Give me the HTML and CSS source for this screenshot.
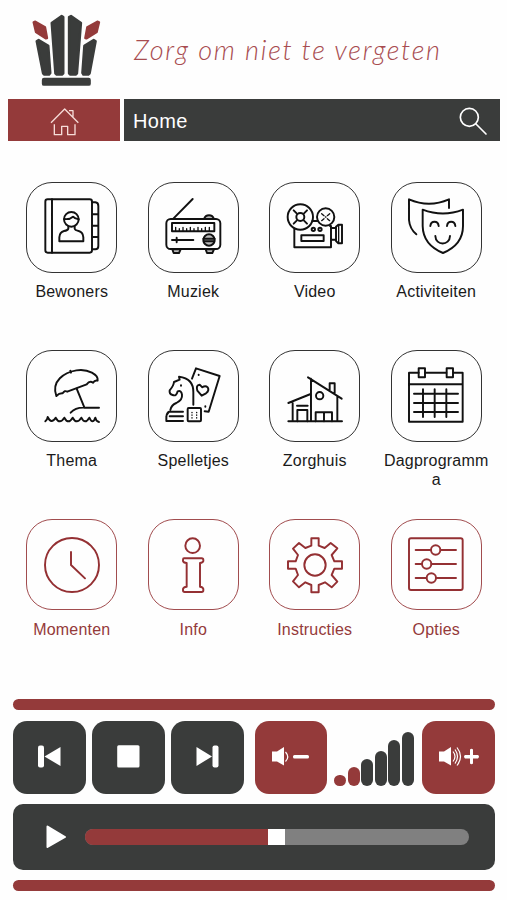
FILE: index.html
```html
<!DOCTYPE html>
<html lang="nl">
<head>
    <meta charset="UTF-8">
    <meta name="viewport" content="width=device-width, initial-scale=1.0">
    <title>Home</title>
    <link rel="stylesheet" href="styles.css">
</head>
<body>

    <header class="header">
        <svg class="logo" viewBox="96 42 207 216">
            <g class="logo-dark">
                <path d="M155 69L185 48L190 51V220L186 224H170L166 220Z"/>
                <path d="M243 69L213 48L207 51V220L211 224H227L231 220Z"/>
                <path d="M110 124L116 120L145 137L151 219L147 224H133L129 220Z"/>
                <path d="M287 124L281 120L253 137L247 219L250 224H265L269 220Z"/>
                <rect x="129" y="237" width="140" height="17" rx="3"/>
            </g>
            <g class="logo-red">
                <path d="M101 67L106 65L135 82L141 114L137 115L108 96Z"/>
                <path d="M297 67L292 65L262 82L256 114L260 115L290 96Z"/>
            </g>
        </svg>
        <div class="tagline">Zorg om niet te vergeten</div>
    </header>

    <nav class="navbar">
        <a class="home-button">
            <svg class="home-icon" viewBox="147 321 87 87">
                <path d="M150 368L191 327L232 368M204 332H216V350M160 373V404H182V379H200V404H222V373"/>
            </svg>
        </a>
        <div class="title-bar">
            <span>Home</span>
            <svg class="search-icon" viewBox="618 320 84 84">
                <circle cx="649" cy="351" r="27"/>
                <path d="M669 371L699 401"/>
            </svg>
        </div>
    </nav>

    <main class="menu">
        <a class="item">
            <div class="tile">
                <svg class="icon" viewBox="83 87 168 168">
                    <rect x="87" y="88" width="140" height="160" rx="7"/>
                    <path d="M107 88V248M228 97H237Q246 98 246 108V228Q246 238 237 238H228M229 133H246M229 167H246M229 201H246"/>
                    <circle cx="165" cy="148" r="22"/>
                    <path d="M144 147Q160 149 170 140Q176 147 187 148M156 169V176Q154 182 143 183Q130 186 129 202V214H201V202Q200 186 187 183Q176 181 175 176V169"/>
                </svg>
            </div>
            <span class="label">Bewoners</span>
        </a>
        <a class="item">
            <div class="tile">
                <svg class="icon" viewBox="81 87 168 168">
                    <path d="M106 146L164 87"/>
                    <rect x="85" y="147" width="162" height="90" rx="13"/>
                    <path class="shade" d="M198 147Q202 136 213 136T228 147Z"/>
                    <path class="shade" d="M103 238L107 249H123L128 238ZM203 238L207 249H223L228 238Z"/>
                    <rect x="102" y="159" width="127" height="25"/>
                    <path class="thin" d="M113 184V172M124 184V176M135 184V172M146 184V176M157 184V172M168 184V176M180 184V172M191 184V176M202 184V172M214 184V172"/>
                    <path d="M102 210H166M116 203V217"/>
                    <circle class="shade" cx="213" cy="210" r="17"/>
                    <path d="M196 206H230M197 214H229"/>
                </svg>
            </div>
            <span class="label">Muziek</span>
        </a>
        <a class="item">
            <div class="tile">
                <svg class="icon" viewBox="86 87 168 168">
                    <circle cx="126" cy="141" r="38"/>
                    <circle cx="126" cy="141" r="12"/>
                    <path d="M106 121L115 130M146 121L137 130M106 161L115 152M146 161L137 152"/>
                    <circle cx="202" cy="141" r="26"/>
                    <path class="thin" d="M190 131L197 137M214 131L207 137M190 152L197 146M214 152L207 146M201 141H203"/>
                    <path d="M162 153H178M108 176V232H218V168H215M218 174H233M218 209H233"/>
                    <circle cx="165" cy="178" r="5"/>
                    <circle cx="185" cy="178" r="5"/>
                    <rect x="129" y="196" width="67" height="17"/>
                    <path d="M233 170L240 164H251V220H240L233 213Z"/>
                    <path class="thin" d="M241 166V218"/>
                </svg>
            </div>
            <span class="label">Video</span>
        </a>
        <a class="item">
            <div class="tile">
                <svg class="icon" viewBox="85 87 168 168">
                    <path d="M208 114V88Q148 114 88 88V150Q90 176 110 193"/>
                    <path d="M129 119Q190 142 250 119V168Q250 224 190 249Q130 224 129 168Z"/>
                    <path d="M152 168C154 151 175 151 177 168M202 168C204 151 225 151 227 168M167 198C168 228 210 228 211 198"/>
                </svg>
            </div>
            <span class="label">Activiteiten</span>
        </a>

        <a class="item">
            <div class="tile">
                <svg class="icon" viewBox="83 83 168 168">
                    <path d="M162 91L164 97M120 167C104 122 144 96 180 90C216 84 247 104 244 121Q235 119 230 127Q220 120 211 132L153 154Q145 149 139 159Q129 158 120 167Z"/>
                    <path d="M181 145L204 201M163 217Q177 201 204 202H248"/>
                    <path d="M87 243Q93 238 94 230Q105 253 118 232Q130 254 144 232Q156 254 169 232Q181 254 195 232Q206 254 219 232Q229 254 237 232Q239 243 248 245"/>
                </svg>
            </div>
            <span class="label">Thema</span>
        </a>
        <a class="item">
            <div class="tile">
                <svg class="icon" viewBox="448 83 168 168">
                    <path d="M464 209Q467 194 482 188Q501 179 499 163Q497 149 486 153Q482 169 471 164Q460 161 462 150Q474 136 475 125L492 118L490 109Q534 114 533 156V193"/>
                    <path d="M496 135V136M502 214H460L453 224M502 228H462M502 242H452Q451 216 460 214M452 228V242"/>
                    <path d="M529 115L541 84L612 107L579 214L567 213M549 103V104M569 198V199"/>
                    <path d="M558 166L545 151Q540 134 552 133L560 141Q569 134 576 141Q582 151 571 159Z"/>
                    <rect x="516" y="203" width="40" height="40" rx="3"/>
                    <path class="thin" d="M529 216V217M543 216V217M529 224V225M543 224V225M529 232V233M543 232V233"/>
                </svg>
            </div>
            <span class="label">Spelletjes</span>
        </a>
        <a class="item">
            <div class="tile">
                <svg class="icon" viewBox="86 83 168 168">
                    <path d="M90 243H251M90 188L157 161M103 184V243M158 115V243M149 111L250 175M237 168V243M214 148V129H229V157M116 196H148"/>
                    <circle cx="184" cy="166" r="11"/>
                    <path d="M117 243V209H147V243M172 243V216H221V243M197 216V243"/>
                </svg>
            </div>
            <span class="label">Zorghuis</span>
        </a>
        <a class="item">
            <div class="tile">
                <svg class="icon" viewBox="451 83 168 168">
                    <path d="M483 97H454V244H615V97H587M502 97H566M454 132H615"/>
                    <rect x="483" y="84" width="19" height="27"/>
                    <rect x="567" y="84" width="19" height="27"/>
                    <path d="M469 160H601M469 188H601M469 215H601M496 147V230M531 147V230M566 147V230"/>
                </svg>
            </div>
            <span class="label">Dagprogramma</span>
        </a>

        <a class="item red">
            <div class="tile">
                <svg class="icon" viewBox="83 79 168 168">
                    <circle cx="167" cy="163" r="81"/>
                    <path d="M164 124V163L206 203"/>
                </svg>
            </div>
            <span class="label">Momenten</span>
        </a>
        <a class="item red">
            <div class="tile">
                <svg class="icon" viewBox="448 79 168 168">
                    <circle cx="531" cy="105" r="22"/>
                    <path d="M505 143H558Q563 143 563 148V151Q562 156 553 157V228Q562 229 563 235V239Q563 244 558 244H507Q502 244 502 239V235Q503 229 513 228V157Q503 156 502 151V147Q502 143 505 143Z"/>
                </svg>
            </div>
            <span class="label">Info</span>
        </a>
        <a class="item red">
            <div class="tile">
                <svg class="icon" viewBox="86 79 168 168">
                    <circle cx="170" cy="163" r="32"/>
                    <path d="M159 83H181V105L199 112L217 97L237 113L220 133L228 152H251V174H228L220 193L237 213L220 230L200 215L181 223V245H159V223L141 215L122 230L104 212L119 193L112 174H89V152H112L119 133L104 114L122 97L141 112L159 105Z"/>
                </svg>
            </div>
            <span class="label">Instructies</span>
        </a>
        <a class="item red">
            <div class="tile">
                <svg class="icon" viewBox="451 79 168 168">
                    <rect x="454" y="83" width="161" height="155" rx="6"/>
                    <path d="M474 118H520M549 118H595M474 160H492M521 160H595M474 202H506M535 202H595"/>
                    <circle cx="534" cy="118" r="14"/>
                    <circle cx="507" cy="160" r="14"/>
                    <circle cx="521" cy="202" r="14"/>
                </svg>
            </div>
            <span class="label">Opties</span>
        </a>
    </main>

    <footer class="player">
        <div class="stripe"></div>
        <div class="controls">
            <div class="buttons">
                <div class="button">
                    <svg viewBox="0 0 73 73">
                        <rect x="25" y="24.5" width="6" height="22" rx="2"/>
                        <path d="M31.5 35.5L47.5 26V45Z"/>
                    </svg>
                </div>
                <div class="button">
                    <svg viewBox="0 0 73 73">
                        <rect x="25.2" y="24.2" width="22.3" height="22.3" rx="1.5"/>
                    </svg>
                </div>
                <div class="button">
                    <svg viewBox="0 0 73 73">
                        <rect x="41.5" y="24.5" width="6" height="22" rx="2"/>
                        <path d="M41 35.5L25.5 26V45Z"/>
                    </svg>
                </div>
            </div>
            <div class="button volume-down">
                <svg viewBox="0 0 72 73">
                    <path d="M17 30.5H22L29 26V44.5L22 40.5H17Z"/>
                    <path class="wave" d="M30.5 31Q35 36 30.5 40.5"/>
                    <rect x="38" y="34" width="16" height="3.4" rx="1.5"/>
                </svg>
            </div>
            <div class="volume-bars">
                <span class="bar bar-1 on"></span>
                <span class="bar bar-2 on"></span>
                <span class="bar bar-3"></span>
                <span class="bar bar-4"></span>
                <span class="bar bar-5"></span>
                <span class="bar bar-6"></span>
            </div>
            <div class="button volume-up">
                <svg viewBox="0 0 73 73">
                    <path d="M17 30.5H22L29 26V44.5L22 40.5H17Z"/>
                    <path class="wave" d="M31 30.5Q35 35.5 31 40.5M33 28.5Q38 35.5 33 42.5M35 26.5Q42 35.5 35 44.5"/>
                    <path d="M48 28.5Q49.5 27 51 28.5V34H56Q58 35.7 56 37.4H51V42.5Q49.5 44 48 42.5V37.4H43Q41 35.7 43 34H48Z"/>
                </svg>
            </div>
        </div>
        <div class="progress">
            <svg class="play" viewBox="0 0 21 24">
                <path d="M1.5 1.5L19 12L1.5 22Z"/>
            </svg>
            <div class="track">
                <div class="played"></div>
                <div class="thumb"></div>
            </div>
        </div>
        <div class="stripe"></div>
    </footer>

</body>
</html>
```
FILE: styles.css
```css
* {
    box-sizing: border-box;
}

body {
    font-family: "Liberation Sans", Arial, sans-serif;
    background: #fefefe;
    color: #1a1a1a;
    margin: 0;
    height: 900px;
    overflow: hidden;
}

svg {
    display: block;
    overflow: visible;
}

.header {
    display: flex;
    height: 99px;
    padding: 14px 0 0 32px;
}

.logo {
    width: 69px;
    height: 72px;
    stroke-width: 7;
    stroke-linejoin: round;
}

.logo-dark {
    fill: #3a3c3b;
    stroke: #3a3c3b;
}

.logo-red {
    fill: #943a3a;
    stroke: #943a3a;
}

.tagline {
    font-family: Lato, "Liberation Sans", sans-serif;
    font-size: 27px;
    font-style: italic;
    font-weight: 300;
    line-height: 32px;
    letter-spacing: 1.7px;
    white-space: nowrap;
    color: #a84c50;
    margin: 20px 0 0 33px;
}

.navbar {
    display: flex;
    gap: 4px;
    height: 42px;
    padding: 0 7px 0 8px;
}

.home-button {
    display: flex;
    justify-content: center;
    align-items: center;
    width: 112px;
    padding-top: 2px;
    background: #943a3a;
}

.home-icon {
    width: 29px;
    height: 29px;
    fill: none;
    stroke: #f6dcd8;
    stroke-width: 4;
    stroke-linejoin: round;
}

.title-bar {
    display: flex;
    flex: 1;
    justify-content: space-between;
    align-items: center;
    padding: 2px 13px 0 9px;
    background: #3a3c3b;
    color: #fff;
    font-size: 20px;
    letter-spacing: 0.3px;
}

.search-icon {
    width: 28px;
    height: 28px;
    fill: none;
    stroke: #fff;
    stroke-width: 5;
    stroke-linecap: round;
}

.menu {
    display: grid;
    grid-template-columns: repeat(4, 121.5px);
    grid-auto-rows: 168.7px;
    height: 558px;
    padding: 40.5px 0 0 11px;
}

.item {
    display: flex;
    flex-direction: column;
    align-items: center;
}

.tile {
    display: flex;
    justify-content: center;
    align-items: center;
    width: 91px;
    height: 91.5px;
    border: 1.3px solid #333;
    border-radius: 26px;
}

.icon {
    width: 56px;
    height: 56px;
    fill: none;
    stroke: #111;
    stroke-width: 5.8;
    stroke-linecap: round;
    stroke-linejoin: round;
}

.icon .thin {
    stroke-width: 4;
}

.icon .shade {
    fill: #bbb;
}

.label {
    width: 109px;
    margin-top: 9.3px;
    font-size: 16px;
    line-height: 19px;
    letter-spacing: 0.2px;
    text-align: center;
    word-break: break-all;
}

.red {
    color: #943a3a;
}

.red .tile {
    border-color: #a14c4e;
}

.red .icon {
    stroke: #943033;
}

.player {
    display: flex;
    flex-direction: column;
    padding: 0 12px 0 13px;
}

.stripe {
    height: 11px;
    border-radius: 6px;
    background: #943a3a;
}

.controls {
    display: flex;
    height: 73px;
    margin: 11px 0 9.5px;
}

.buttons {
    display: flex;
    justify-content: space-between;
    width: 231px;
    margin-right: 10.5px;
}

.button {
    width: 73px;
    height: 73px;
    border-radius: 14px;
    background: #3a3c3b;
    fill: #fff;
}

.button svg {
    width: 100%;
    height: 100%;
}

.volume-down {
    width: 72px;
    background: #943a3a;
}

.volume-up {
    background: #943a3a;
}

.wave {
    fill: none;
    stroke: #fff;
    stroke-width: 1.2;
}

.volume-bars {
    display: flex;
    justify-content: space-between;
    align-items: flex-end;
    width: 80px;
    margin: 0 8px 0 7.5px;
    padding-bottom: 8px;
}

.bar {
    width: 12.4px;
    border-radius: 6px;
    background: #3a3c3b;
}

.bar.on {
    background: #943a3a;
}

.bar-1 {
    height: 11px;
}

.bar-2 {
    height: 19px;
}

.bar-3 {
    height: 27px;
}

.bar-4 {
    height: 35px;
}

.bar-5 {
    height: 46px;
}

.bar-6 {
    height: 54px;
}

.progress {
    display: flex;
    align-items: center;
    height: 66px;
    margin-bottom: 10.5px;
    padding: 0 26px 0 33px;
    border-radius: 10px;
    background: #3a3c3b;
}

.play {
    width: 21px;
    height: 24px;
    fill: #fff;
    stroke: #fff;
    stroke-width: 2;
    stroke-linejoin: round;
}

.track {
    display: flex;
    flex: 1;
    height: 16px;
    margin: 1px 0 0 17.5px;
    border-radius: 8px;
    background: #808080;
    overflow: hidden;
}

.played {
    width: 183.5px;
    background: #943a3a;
}

.thumb {
    width: 16.5px;
    background: #fff;
}
```
